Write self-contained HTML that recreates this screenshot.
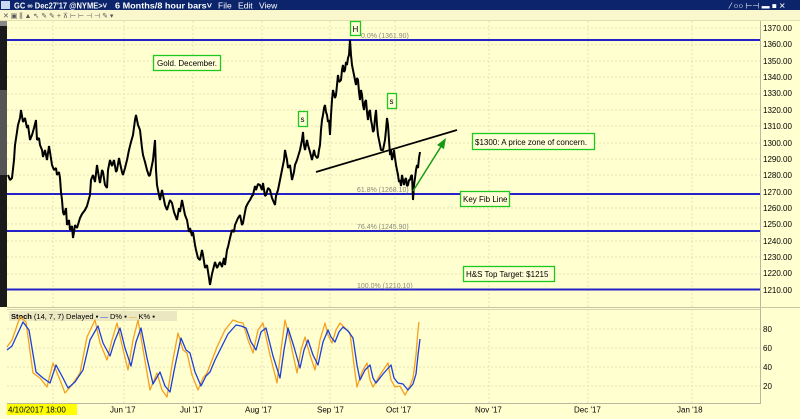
<!DOCTYPE html>
<html><head><meta charset="utf-8"><style>
html,body{margin:0;padding:0;width:800px;height:419px;overflow:hidden;background:#ffffd0;font-family:"Liberation Sans",sans-serif}
</style></head><body>
<svg width="800" height="419" xmlns="http://www.w3.org/2000/svg" font-family="Liberation Sans, sans-serif">
<rect width="800" height="419" fill="#ffffcf"/>
<!-- title bar -->
<rect x="0" y="0" width="800" height="10" fill="#0b246b"/>
<rect x="1" y="1" width="9" height="8" fill="#c8d8f0"/>
<text x="14" y="8.5" font-size="8.5" font-weight="bold" fill="#fff" textLength="93" lengthAdjust="spacingAndGlyphs">GC ∞ Dec27'17 @NYME&gt;˅</text>
<text x="115" y="8.5" font-size="8.5" font-weight="bold" fill="#fff" textLength="97" lengthAdjust="spacingAndGlyphs">6 Months/8 hour bars˅</text>
<text x="218" y="8.5" font-size="8.5" fill="#fff">File</text>
<text x="238" y="8.5" font-size="8.5" fill="#fff">Edit</text>
<text x="259" y="8.5" font-size="8.5" fill="#fff">View</text>
<text x="730" y="8.5" font-size="8" fill="#fff">⁄ ○○ ⊢⊣ ▬ ■ ✕</text>
<!-- toolbar -->
<rect x="0" y="10" width="800" height="10" fill="#fbf7cc"/>
<text x="3" y="18" font-size="7" fill="#555">✕ ▣ ⫼ ▲ ↖ ✎ ✎  + ⊼ ⊢ ⊢ ⊣ ⊣ ✎ ▾</text>
<line x1="0" y1="20.5" x2="800" y2="20.5" stroke="#e2dfb0"/>
<!-- left strip -->
<rect x="0" y="21" width="7" height="286" fill="#1a1a1a"/>
<rect x="0" y="90" width="7" height="85" fill="#555"/>
<rect x="0" y="21" width="7" height="5" fill="#888"/>
<!-- panels borders -->
<line x1="760.5" y1="21" x2="760.5" y2="404" stroke="#b8b8a0"/>
<line x1="7" y1="307.5" x2="800" y2="307.5" stroke="#c8c6a0"/>
<line x1="7" y1="309.5" x2="760" y2="309.5" stroke="#d8d6b0"/>
<line x1="7" y1="403.5" x2="760" y2="403.5" stroke="#b8b8a0"/>
<!-- grid -->
<g stroke="#e4e2b8" stroke-dasharray="2,2" stroke-width="1">
<line x1="7" x2="760" y1="28" y2="28"/><line x1="7" x2="760" y1="44.5" y2="44.5"/><line x1="7" x2="760" y1="61" y2="61"/><line x1="7" x2="760" y1="77" y2="77"/><line x1="7" x2="760" y1="94" y2="94"/><line x1="7" x2="760" y1="110" y2="110"/><line x1="7" x2="760" y1="126" y2="126"/><line x1="7" x2="760" y1="143" y2="143"/><line x1="7" x2="760" y1="159" y2="159"/><line x1="7" x2="760" y1="175" y2="175"/><line x1="7" x2="760" y1="208" y2="208"/><line x1="7" x2="760" y1="224" y2="224"/><line x1="7" x2="760" y1="241" y2="241"/><line x1="7" x2="760" y1="257" y2="257"/><line x1="7" x2="760" y1="274" y2="274"/>
<line x1="7" x2="760" y1="329" y2="329"/><line x1="7" x2="760" y1="348" y2="348"/><line x1="7" x2="760" y1="367" y2="367"/><line x1="7" x2="760" y1="386" y2="386"/>
<line x1="53" x2="53" y1="21" y2="403"/><line x1="124" x2="124" y1="21" y2="403"/><line x1="193" x2="193" y1="21" y2="403"/><line x1="262" x2="262" y1="21" y2="403"/><line x1="330" x2="330" y1="21" y2="403"/><line x1="395" x2="395" y1="21" y2="403"/><line x1="489" x2="489" y1="21" y2="403"/><line x1="588" x2="588" y1="21" y2="403"/><line x1="692" x2="692" y1="21" y2="403"/>
</g>
<!-- fib lines -->
<g stroke="#2323c8" stroke-width="2">
<line x1="7" x2="760" y1="40" y2="40"/><line x1="7" x2="760" y1="194" y2="194"/><line x1="7" x2="760" y1="231" y2="231"/><line x1="7" x2="760" y1="289.5" y2="289.5"/>
</g>
<g font-size="7" fill="#8a8a7a">
<text x="361" y="38">0.0% (1361.90)</text>
<text x="357" y="192">61.8% (1268.10)</text>
<text x="357" y="229">76.4% (1245.90)</text>
<text x="357" y="288">100.0% (1210.10)</text>
</g>
<!-- price -->
<polyline fill="none" stroke="#000" stroke-width="2" stroke-linejoin="bevel" points="8,175 10,180 12,178 14,160 15,145 17,132 18,125 20,118 21,110 23,122 25,118 27,128 28,125 30,140 32,135 34,128 36,120 37,140 39,138 40,145 42,150 43,157 45,150 47,160 49,146 50,152 52,165 54,170 56,168 57,175 59,172 60,178 61,192 62,200 63,212 64,215 66,208 67,225 69,220 70,230 72,226 73,238 74,232 75,225 77,228 80,218 82,214 85,210 87,206 90,195 91,180 93,175 95,182 97,165 99,178 100,183 102,170 103,172 105,185 107,188 108,170 110,160 112,166 114,160 116,172 117,170 119,158 120,163 122,172 123,175 125,168 127,160 129,150 131,142 133,135 135,120 136,115 138,125 140,130 142,148 143,155 145,162 147,170 149,176 150,175 152,165 153,160 154,150 155,140 156,170 157,185 159,195 160,200 162,190 163,195 165,205 167,210 170,200 172,203 174,212 177,220 179,208 180,212 182,200 183,205 185,215 187,220 189,232 190,228 192,236 193,232 195,245 196,250 198,258 200,260 202,250 203,255 205,268 207,265 209,278 210,285 212,274 213,270 215,262 217,268 220,262 222,267 224,258 225,265 227,250 228,247 230,238 232,230 234,232 235,225 238,218 240,215 242,225 243,223 245,212 246,207 248,203 250,200 252,196 253,195 255,186 256,190 258,184 260,185 262,190 263,183 265,196 266,195 268,188 270,190 272,198 275,205 276,196 278,190 280,180 282,170 284,160 285,150 287,160 288,168 290,165 292,180 294,172 295,165 297,160 300,150 302,140 303,132 304,145 305,150 307,140 308,145 310,152 312,160 314,150 315,155 317,158 318,157 319,150 320,145 321,130 322,120 323,115 324,108 325,105 326,112 327,115 328,122 329,120 330,135 331,115 332,100 333,90 335,98 336,95 337,85 338,75 339,82 341,80 342,70 343,65 344,72 345,70 346,62 347,65 348,58 349,55 350,40 351,55 352,65 353,70 354,75 355,80 356,85 357,78 358,80 359,92 360,100 361,90 362,95 363,105 364,110 365,102 366,100 367,112 368,120 369,112 370,110 371,120 372,125 373,132 374,130 375,118 376,110 377,125 378,135 379,140 380,145 381,150 383,150 384,145 385,140 386,130 387,118 388,125 389,140 390,155 391,150 392,160 393,156 394,150 395,158 396,165 397,170 398,175 399,182 400,180 401,186 402,175 403,180 404,185 405,180 406,178 407,186 408,185 409,180 410,180 411,176 412,175 413,200 414,185 415,178 416,170 417,165 418,168 419,158 420,152"/>
<!-- neckline & arrow -->
<line x1="316" y1="172" x2="457" y2="130" stroke="#000" stroke-width="1.7"/>
<line x1="413" y1="191" x2="442" y2="145" stroke="#169a16" stroke-width="1.5"/>
<polygon points="446,138 437,145 444,149" fill="#169a16"/>
<!-- labels -->
<g font-size="8" fill="#000">
<rect x="153.5" y="55.5" width="67" height="15" fill="#ffffd8" stroke="#1ec81e" stroke-width="1.3"/>
<text x="157" y="66">Gold. December.</text>
<rect x="350.5" y="21.5" width="10" height="14" fill="#ffffd8" stroke="#1ec81e" stroke-width="1.3"/>
<text x="352.5" y="32">H</text>
<rect x="298.5" y="111.5" width="9" height="15" fill="#ffffd8" stroke="#1ec81e" stroke-width="1.3"/>
<text x="300.5" y="122">s</text>
<rect x="387.5" y="93.5" width="9" height="15" fill="#ffffd8" stroke="#1ec81e" stroke-width="1.3"/>
<text x="389.5" y="104">s</text>
<rect x="472.5" y="133.5" width="122" height="16" fill="#ffffd8" stroke="#1ec81e" stroke-width="1.3"/>
<text x="475" y="145">$1300: A price zone of concern.</text>
<rect x="460.5" y="191.5" width="49" height="15" fill="#ffffd8" stroke="#1ec81e" stroke-width="1.3"/>
<text x="463" y="202">Key Fib Line</text>
<rect x="463.5" y="266.5" width="91" height="15" fill="#ffffd8" stroke="#1ec81e" stroke-width="1.3"/>
<text x="466" y="277">H&amp;S Top Target: $1215</text>
</g>
<!-- price axis -->
<g font-size="8" fill="#000">
<text x="763" y="31">1370.00</text><text x="763" y="47">1360.00</text><text x="763" y="64">1350.00</text><text x="763" y="80">1340.00</text><text x="763" y="96">1330.00</text><text x="763" y="113">1320.00</text><text x="763" y="129">1310.00</text><text x="763" y="146">1300.00</text><text x="763" y="162">1290.00</text><text x="763" y="178">1280.00</text><text x="763" y="195">1270.00</text><text x="763" y="211">1260.00</text><text x="763" y="227">1250.00</text><text x="763" y="244">1240.00</text><text x="763" y="260">1230.00</text><text x="763" y="276">1220.00</text><text x="763" y="293">1210.00</text>
<text x="763" y="332">80</text><text x="763" y="351">60</text><text x="763" y="370">40</text><text x="763" y="389">20</text>
</g>
<!-- stoch -->
<rect x="9" y="311" width="168" height="10" fill="#ebe7c0"/>
<text x="11" y="319" font-size="7.5" fill="#000"><tspan font-weight="bold">Stoch</tspan>  (14, 7, 7) Delayed ▪ <tspan fill="#2040d0">—</tspan> D% ▪ <tspan fill="#f0a020">—</tspan> K% ▪</text>
<polyline fill="none" stroke="#f5a020" stroke-width="1.3" stroke-linejoin="round" points="7,347 12,340 20,317 26,322 33,373 40,378 47,387 53,363 60,380 65,393 72,385 80,373 87,337 95,320 100,343 107,360 112,340 117,323 122,345 128,370 133,340 138,320 144,355 150,390 157,373 162,390 167,397 172,365 178,333 183,350 187,353 192,375 198,390 203,378 207,373 212,360 217,347 225,330 233,320 238,322 243,323 248,340 253,353 258,330 263,323 270,355 277,383 281,350 285,320 291,345 297,373 301,350 305,337 310,355 315,370 320,340 325,323 328,335 332,343 336,330 340,323 345,328 350,333 354,365 357,387 362,372 367,363 370,380 373,387 380,375 388,363 391,380 395,387 400,386 405,395 410,386 413,378 416,355 418,330 419,322"/>
<polyline fill="none" stroke="#1c3fd8" stroke-width="1.3" stroke-linejoin="round" points="7,350 12,346 23,322 29,330 36,372 43,378 50,383 56,365 63,378 68,388 75,382 83,370 90,340 98,326 103,343 110,356 115,340 120,328 125,348 131,366 136,342 141,328 147,358 153,384 160,372 165,386 170,392 175,366 181,338 186,350 190,353 195,372 201,386 206,376 210,372 215,360 220,350 228,334 236,325 241,326 246,328 251,342 256,350 261,332 266,328 273,356 280,378 284,350 288,328 294,347 300,368 304,350 308,340 313,355 318,365 323,342 328,330 331,337 335,342 339,332 343,327 348,331 353,338 357,365 360,380 365,370 370,365 373,378 376,383 383,374 391,365 394,378 398,383 403,384 408,390 413,384 416,374 418,355 420,339"/>
<!-- date axis -->
<rect x="7" y="404" width="70" height="11" fill="#ffff00"/>
<g font-size="8" fill="#000">
<text x="8" y="412.5">4/10/2017 18:00</text>
<text x="110" y="412.5">Jun '17</text><text x="180" y="412.5">Jul '17</text><text x="245" y="412.5">Aug '17</text><text x="317" y="412.5">Sep '17</text><text x="386" y="412.5">Oct '17</text><text x="475" y="412.5">Nov '17</text><text x="574" y="412.5">Dec '17</text><text x="677" y="412.5">Jan '18</text>
</g>
</svg>
</body></html>
